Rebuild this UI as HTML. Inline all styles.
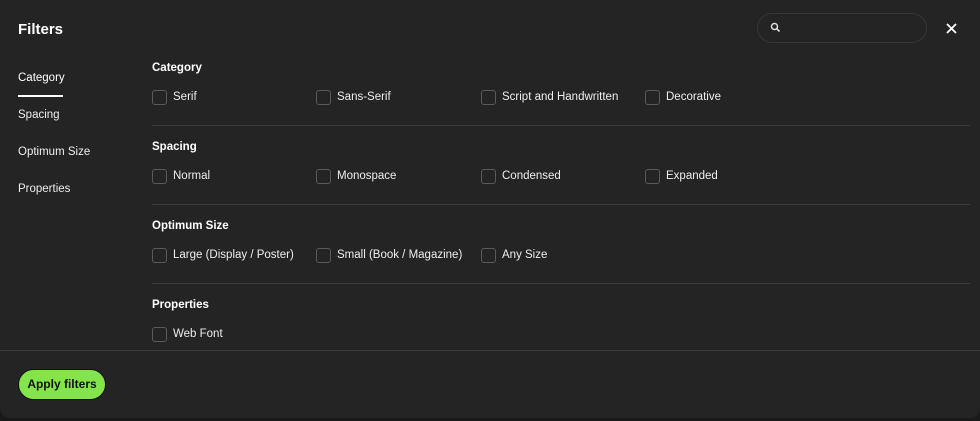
<!DOCTYPE html><html><head><style>
body{margin:0;width:980px;height:421px;background:#1a1a1a;font-family:"Liberation Sans",sans-serif;color:#fff;overflow:hidden;position:relative}
.m{position:absolute;left:0;top:0;width:980px;height:418px;background:#242424;border-radius:0 0 10px 10px}
.a{position:absolute;white-space:nowrap}
.t{font-size:15px;font-weight:bold;left:18px;top:21px}
.n{font-size:11.5px;line-height:15px;left:18px;color:#eee}
.h{font-size:11.5px;line-height:15px;font-weight:bold;left:152px}
.cb{position:absolute;width:13px;height:13px;border:1.5px solid #5a5a5a;border-radius:3px}
.l{font-size:11.5px;line-height:15px;color:#eee}
.d{position:absolute;left:152px;width:818px;height:1px;background:#3a3a3a}
</style></head><body><div class="m">
<div class="a t">Filters</div>
<div style="position:absolute;left:757px;top:13px;width:168px;height:28px;border:1px solid #363636;border-radius:15px"></div>
<svg class="a" style="left:770px;top:22px" width="11" height="11" viewBox="0 0 11 11"><circle cx="4.5" cy="4.5" r="3" fill="none" stroke="#ddd" stroke-width="1.5"/><path d="M6.8 6.8L9.5 9.5" stroke="#ddd" stroke-width="1.6"/></svg>
<svg class="a" style="left:946px;top:23px" width="11" height="11" viewBox="0 0 11 11"><path d="M1 1L10 10M10 1L1 10" stroke="#fff" stroke-width="1.8"/></svg>
<div class="a n" style="top:71px;color:#fff">Category</div>
<div style="position:absolute;left:18px;top:95px;width:45px;height:2px;background:#fff"></div>
<div class="a n" style="top:108px">Spacing</div>
<div class="a n" style="top:145px">Optimum Size</div>
<div class="a n" style="top:182px">Properties</div>

<div class="a h" style="top:61px">Category</div>
<div class="a h" style="top:140px">Spacing</div>
<div class="a h" style="top:219px">Optimum Size</div>
<div class="a h" style="top:298px">Properties</div>
<div class="d" style="top:125px"></div>
<div class="d" style="top:204px"></div>
<div class="d" style="top:283px"></div>
<div style="position:absolute;left:0;top:350px;width:980px;height:1px;background:#3a3a3a"></div>

<div class="cb" style="left:152px;top:90px"></div><div class="a l" style="left:173px;top:90px">Serif</div>
<div class="cb" style="left:316px;top:90px"></div><div class="a l" style="left:337px;top:90px">Sans-Serif</div>
<div class="cb" style="left:481px;top:90px"></div><div class="a l" style="left:502px;top:90px">Script and Handwritten</div>
<div class="cb" style="left:645px;top:90px"></div><div class="a l" style="left:666px;top:90px">Decorative</div>

<div class="cb" style="left:152px;top:169px"></div><div class="a l" style="left:173px;top:169px">Normal</div>
<div class="cb" style="left:316px;top:169px"></div><div class="a l" style="left:337px;top:169px">Monospace</div>
<div class="cb" style="left:481px;top:169px"></div><div class="a l" style="left:502px;top:169px">Condensed</div>
<div class="cb" style="left:645px;top:169px"></div><div class="a l" style="left:666px;top:169px">Expanded</div>

<div class="cb" style="left:152px;top:248px"></div><div class="a l" style="left:173px;top:248px">Large (Display / Poster)</div>
<div class="cb" style="left:316px;top:248px"></div><div class="a l" style="left:337px;top:248px">Small (Book / Magazine)</div>
<div class="cb" style="left:481px;top:248px"></div><div class="a l" style="left:502px;top:248px">Any Size</div>

<div class="cb" style="left:152px;top:327px"></div><div class="a l" style="left:173px;top:327px">Web Font</div>

<div style="position:absolute;left:18px;top:369px;width:86px;height:29px;background:#84e44c;border:1px solid #111;border-radius:16px;color:#111;font-size:12px;font-weight:bold;text-align:center;line-height:29px">Apply filters</div>
</div></body></html>
